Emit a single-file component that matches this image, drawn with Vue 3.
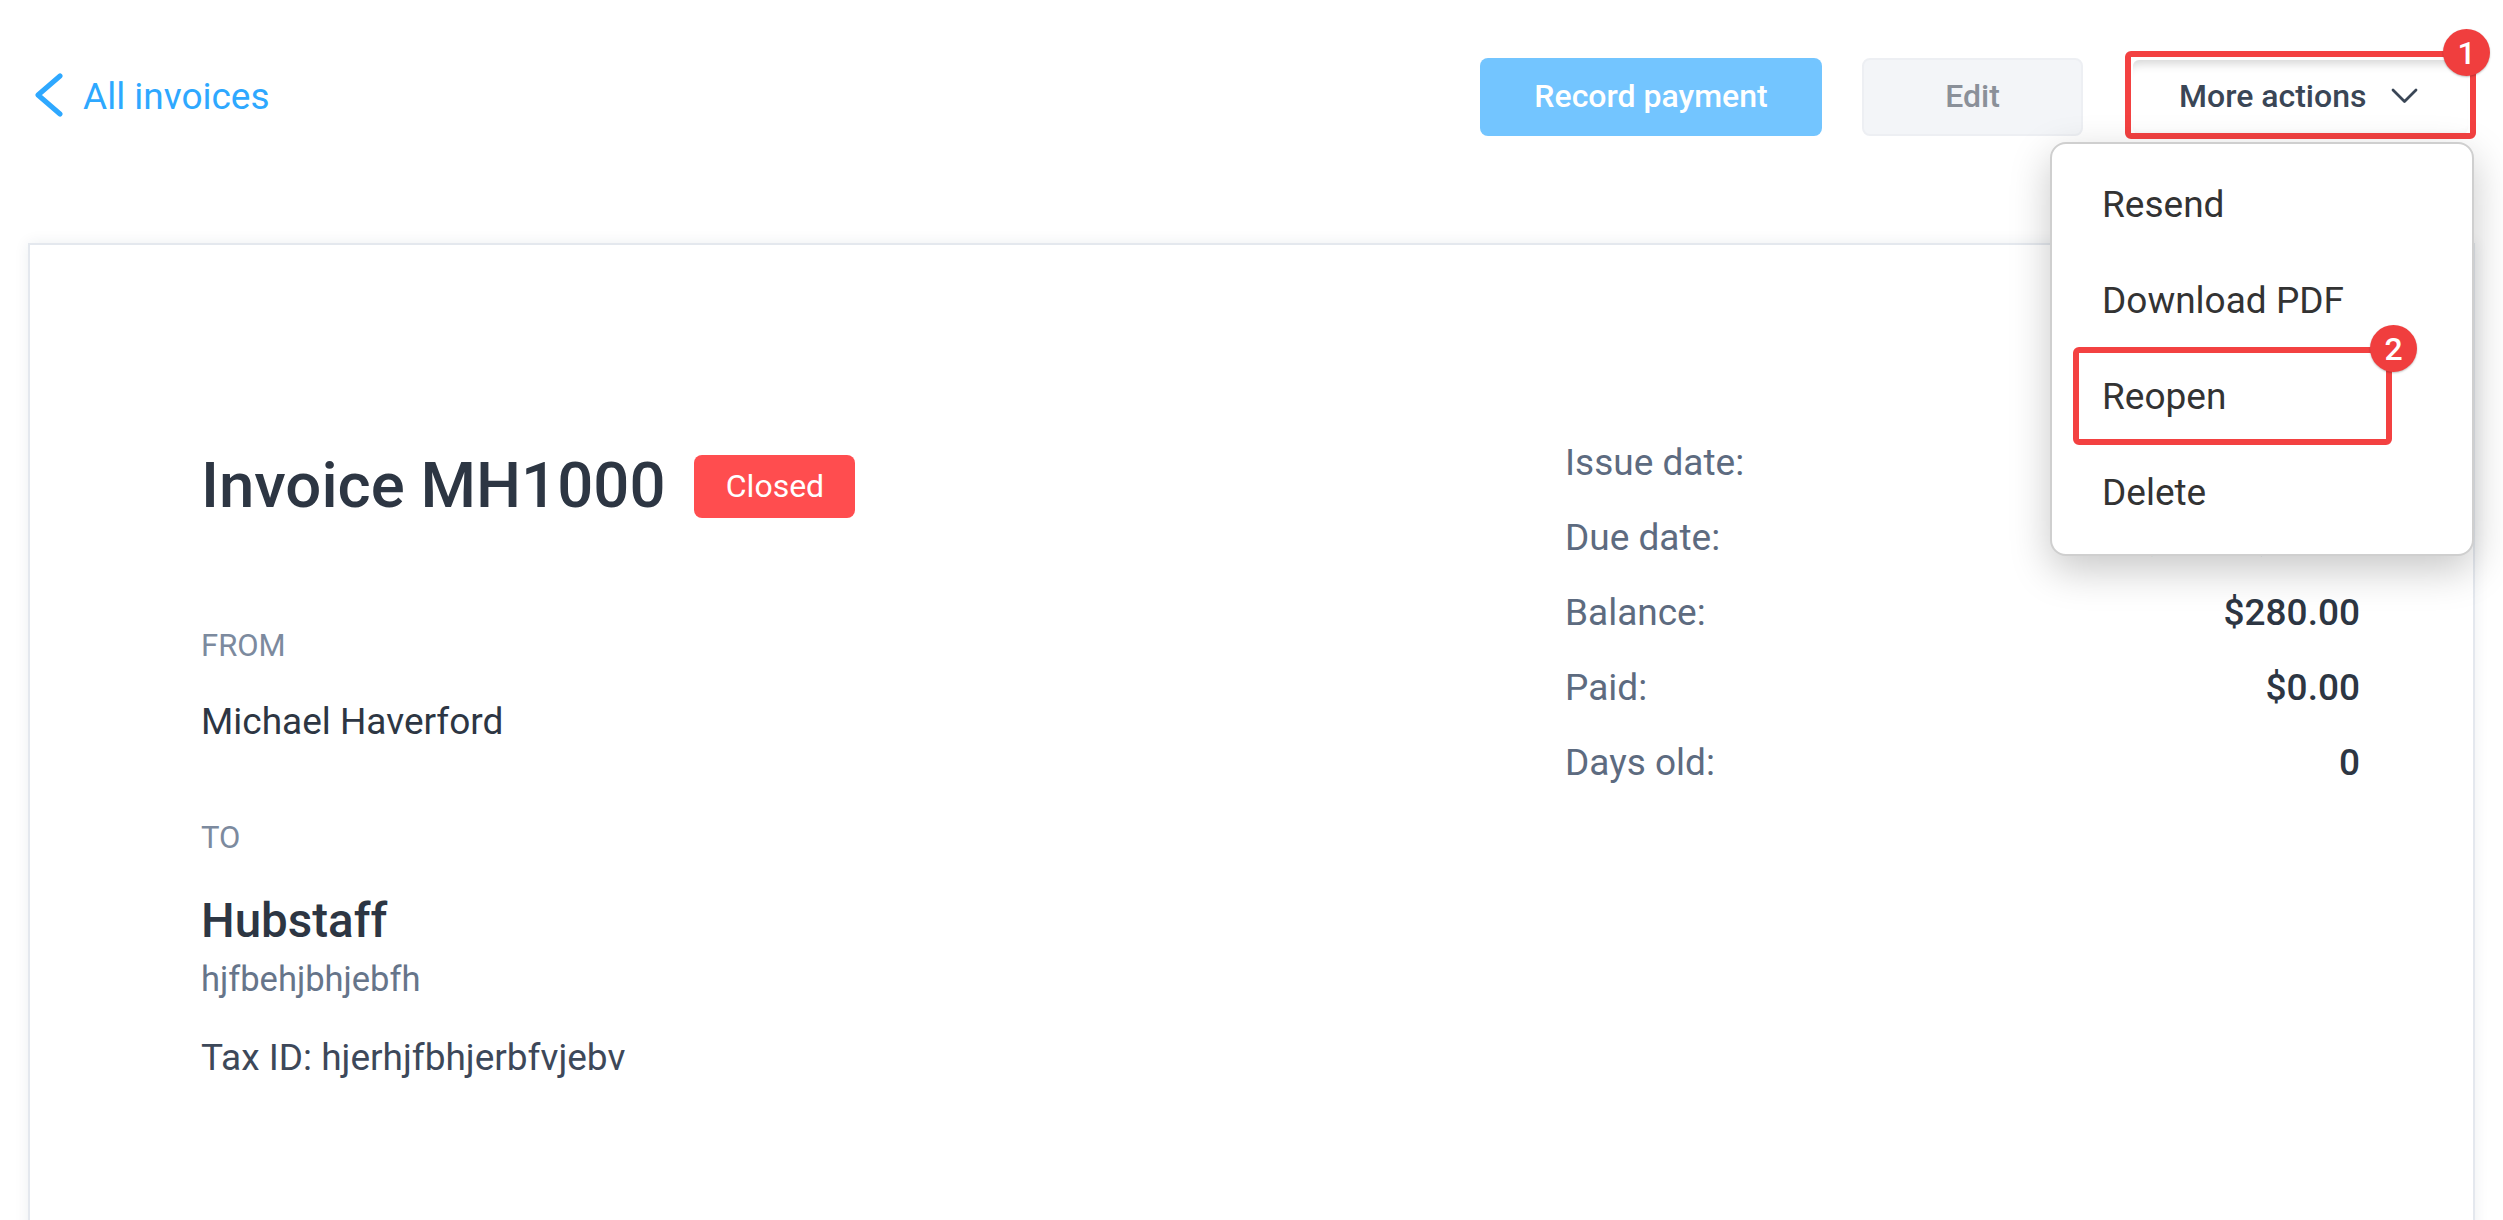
<script setup>
const rows = [
  { label: 'Issue date:', value: '' },
  { label: 'Due date:', value: 'Wed, Jun 1, 2022' },
  { label: 'Balance:', value: '$280.00' },
  { label: 'Paid:', value: '$0.00' },
  { label: 'Days old:', value: '0' },
]
const menu = ['Resend', 'Download PDF', 'Reopen', 'Delete']
</script>

<template>
  <div class="page">
    <header class="topbar">
      <a class="back">
        <svg class="back-icon" width="28" height="44" viewBox="0 0 28 44" fill="none">
          <path d="M25 3 L3 22 L25 41" stroke="#2ea8ff" stroke-width="5" stroke-linecap="round" stroke-linejoin="round" />
        </svg>
        <span>All invoices</span>
      </a>
      <div class="actions">
        <button class="btn primary">Record payment</button>
        <button class="btn edit">Edit</button>
        <div class="more-wrap">
          <button class="btn more">
            <span>More actions</span>
            <svg width="28" height="16" viewBox="0 0 28 16" fill="none">
              <path d="M2 2 L13.5 13.5 L25 2" stroke="#3a4656" stroke-width="2.8" stroke-linecap="round" stroke-linejoin="round" />
            </svg>
          </button>
          <span class="mark mark-more"></span>
          <span class="num num-1">1</span>
          <ul class="menu">
            <li v-for="item in menu" :key="item" class="menu-item">{{ item }}</li>
            <li class="mark mark-reopen"></li>
            <li class="num num-2">2</li>
          </ul>
        </div>
      </div>
    </header>

    <main class="card">
      <section class="left">
        <div class="title-row">
          <h1>Invoice MH1000</h1>
          <span class="status">Closed</span>
        </div>
        <div class="label from-label">FROM</div>
        <div class="name">Michael Haverford</div>
        <div class="label to-label">TO</div>
        <div class="client">Hubstaff</div>
        <div class="addr">hjfbehjbhjebfh</div>
        <div class="tax">Tax ID: hjerhjfbhjerbfvjebv</div>
      </section>
      <section class="right">
        <div v-for="r in rows" :key="r.label" class="row">
          <span class="row-label">{{ r.label }}</span>
          <span class="row-value">{{ r.value }}</span>
        </div>
      </section>
    </main>
  </div>
</template>

<style>
html, body { margin: 0; background: #fff; overflow: hidden; }
</style>

<style scoped>
.page {
  height: 1220px;
  overflow: hidden;
  padding: 58px 28px 0;
  box-sizing: border-box;
  font-family: Roboto, "Liberation Sans", sans-serif;
  background: #fff;
}
.topbar {
  display: flex;
  justify-content: space-between;
  align-items: center;
  height: 78px;
  margin-bottom: 107px;
}
.back {
  display: flex;
  align-items: center;
  gap: 20px;
  padding-left: 7px;
  padding-bottom: 2px;
  color: #2ea8ff;
  font-size: 37px;
}
.back-icon { margin-top: -2px; }
.actions { display: flex; gap: 40px; align-items: stretch; margin-right: 5px; }
.btn {
  font-family: inherit;
  font-size: 32px;
  font-weight: 500;
  border: 2px solid transparent;
  border-radius: 8px;
  box-sizing: border-box;
  height: 78px;
  padding: 0 0 2px;
}
.primary { width: 342px; background: #73c5ff; color: #fff; }
.edit { width: 221px; background: #f3f5f8; border-color: #edeff3; color: #8a9099; }
.more-wrap { position: relative; width: 339px; margin-left: 8px; }
.more {
  width: 100%;
  display: flex;
  align-items: center;
  gap: 25px;
  padding-left: 46px;
  background: #fff;
  color: #3a4656;
  box-shadow: inset 0 12px 10px -8px rgba(0, 0, 0, .16), inset 0 -6px 6px -6px rgba(0, 0, 0, .08);
}
.mark {
  position: absolute;
  border: 6px solid #f34141;
  border-radius: 6px;
  box-sizing: border-box;
  list-style: none;
}
.mark-more { left: -6px; top: -7px; width: 351px; height: 88px; }
.num {
  position: absolute;
  width: 47px;
  height: 47px;
  border-radius: 50%;
  background: #f03e3e;
  color: #fff;
  font-size: 32px;
  font-weight: 500;
  display: flex;
  align-items: center;
  justify-content: center;
  list-style: none;
  box-shadow: 0 1px 2px rgba(0, 0, 0, .25);
}
.num-1 { left: 312px; top: -29px; }
.menu {
  position: absolute;
  top: 84px;
  right: -4px;
  width: 424px;
  height: 414px;
  margin: 0;
  padding: 13px 0 0;
  box-sizing: border-box;
  list-style: none;
  background: #fff;
  border: 2px solid #cfcfcf;
  border-radius: 16px;
  box-shadow: 0 14px 40px rgba(0, 0, 0, .22);
  z-index: 2;
}
.menu-item {
  height: 96px;
  line-height: 96px;
  padding-left: 50px;
  font-size: 37px;
  color: #333;
}
.mark-reopen { left: 21px; top: 203px; width: 319px; height: 98px; }
.num-2 { left: 318px; top: 181px; }
.card {
  display: flex;
  height: 1200px;
  box-sizing: border-box;
  padding: 180px 113px 0 171px;
  background: #fff;
  border: 2px solid #e4e8ee;
  box-shadow: 0 0 14px rgba(30, 50, 80, .08);
}
.left { width: 1364px; padding-top: 23px; color: #2d3643; }
.title-row { display: flex; align-items: center; gap: 29px; height: 76px; }
h1 { margin: 0; font-size: 63.5px; font-weight: 500; line-height: 76px; color: #2d3643; }
.status {
  width: 161px;
  height: 63px;
  line-height: 62px;
  text-align: center;
  background: #ff4d4f;
  border-radius: 8px;
  color: #fff;
  font-size: 32px;
}
.label { font-size: 31px; line-height: 40px; color: #7c8a9e; }
.from-label { margin-top: 102px; }
.name { margin-top: 31px; font-size: 37px; line-height: 50px; }
.to-label { margin-top: 71px; }
.client { margin-top: 33px; font-size: 47.5px; font-weight: 500; line-height: 60px; }
.addr { margin-top: 5px; font-size: 34.5px; line-height: 46px; color: #66758a; }
.tax { margin-top: 31px; font-size: 37px; line-height: 50px; color: #3d4859; }
.right { flex: 1; }
.row {
  display: flex;
  justify-content: space-between;
  height: 75px;
  line-height: 75px;
  font-size: 37px;
}
.row-label { color: #5d6b80; }
.row-value { color: #2d3643; font-weight: 500; }
</style>
